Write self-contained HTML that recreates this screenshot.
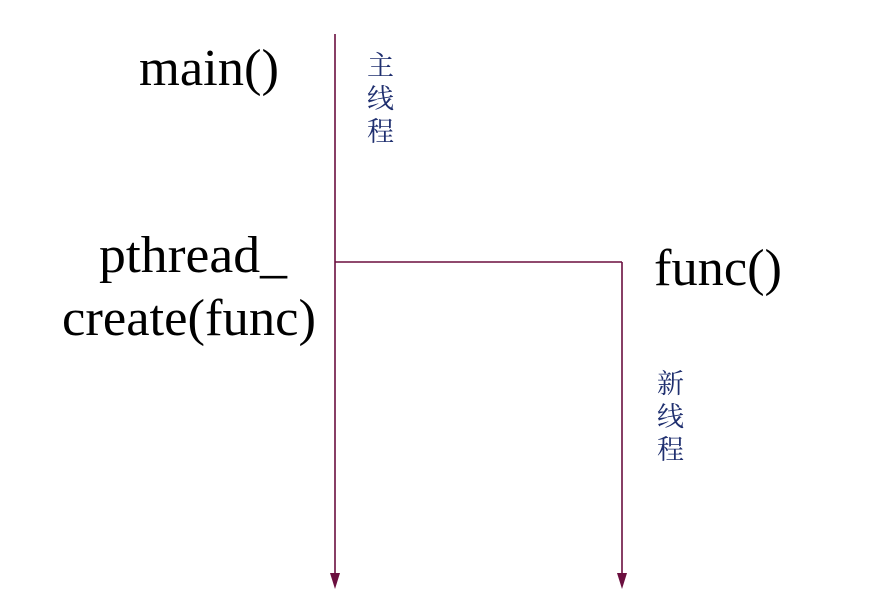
<!DOCTYPE html>
<html><head><meta charset="utf-8"><style>html,body{margin:0;padding:0;background:#fff;width:892px;height:616px;overflow:hidden}</style></head>
<body>
<svg width="892" height="616" xmlns="http://www.w3.org/2000/svg">
<g stroke="#6b0f3f" stroke-width="1.6" fill="none">
<line x1="335" y1="34" x2="335" y2="576"/>
<line x1="335" y1="262" x2="622" y2="262"/>
<line x1="622" y1="262" x2="622" y2="576"/>
</g>
<polygon points="330,573 340,573 335,589" fill="#6b0f3f"/>
<polygon points="617,573 627,573 622,589" fill="#6b0f3f"/>
<g font-family="'Liberation Serif', serif" font-size="52" fill="#000">
<text x="139" y="85" textLength="140" lengthAdjust="spacingAndGlyphs">main()</text>
<text x="99" y="272" textLength="188" lengthAdjust="spacingAndGlyphs">pthread_</text>
<text x="62" y="335" textLength="254" lengthAdjust="spacingAndGlyphs">create(func)</text>
<text x="654" y="285" textLength="128" lengthAdjust="spacingAndGlyphs">func()</text>
</g>
<g font-family="'Liberation Serif','Noto Serif CJK SC',serif" font-size="27" fill="#1f2f6f">
<text x="367" y="75">主</text>
<text x="367" y="108">线</text>
<text x="367" y="141">程</text>
<text x="657" y="393">新</text>
<text x="657" y="426">线</text>
<text x="657" y="459">程</text>
</g>
</svg>
</body></html>
